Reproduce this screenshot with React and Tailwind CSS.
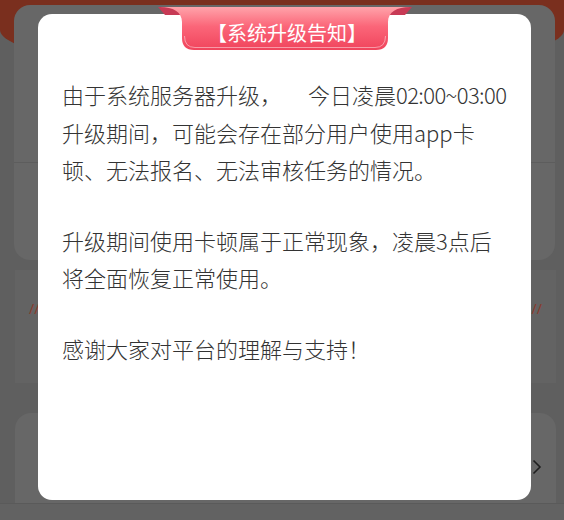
import React from "react";

const cjk = { fontFamily: '"Noto Sans CJK SC", "Noto Sans", sans-serif' };

function Ribbon() {
  return (
    <div className="absolute left-[155px] top-[6px] h-[46px] w-[260px]">
      <svg width="260" height="46" viewBox="0 0 260 46" className="absolute inset-0">
        <defs>
          <linearGradient id="rb" x1="0" y1="0" x2="0" y2="1">
            <stop offset="0" stopColor="#ffa3aa" />
            <stop offset="0.45" stopColor="#fb6679" />
            <stop offset="1" stopColor="#f0445c" />
          </linearGradient>
        </defs>
        <path d="M3 1 L257 1 L250 9 L10 9 Z" fill="#c73a55" />
        <path
          d="M5 1 C18 1 27 6 27 16 L27 32 Q27 44 39 44 L221 44 Q233 44 233 32 L233 16 C233 6 242 1 255 1 Z"
          fill="url(#rb)"
        />
        <path
          d="M29.5 30 Q29.5 41.5 40 41.5 L220 41.5 Q230.5 41.5 230.5 30"
          fill="none"
          stroke="#ffffff"
          strokeOpacity="0.45"
          strokeWidth="1"
        />
      </svg>
      <div
        className="absolute inset-x-0 top-[13px] pl-[4px] text-center text-[20px] leading-[28px] text-white"
        style={cjk}
      >
        【系统升级告知】
      </div>
    </div>
  );
}

function Notice() {
  return (
    <div className="absolute left-[38px] top-[14px] h-[486px] w-[493px] rounded-[14px] bg-white px-[24px] pt-[62px]">
      <div className="text-[22px] font-light leading-[37.5px] text-[#333333]" style={cjk}>
        <p className="whitespace-nowrap">
          由于系统服务器升级，<span className="ml-[26px]">今日凌晨</span>
          <span className="tracking-[-0.6px]">02:00~03:00</span>
          <br />
          升级期间，可能会存在部分用户使用app卡
          <br />
          顿、无法报名、无法审核任务的情况。
        </p>
        <p className="mt-[33px] whitespace-nowrap">
          升级期间使用卡顿属于正常现象，凌晨3点后
          <br />
          将全面恢复正常使用。
        </p>
        <p className="mt-[33px] whitespace-nowrap">感谢大家对平台的理解与支持！</p>
      </div>
    </div>
  );
}

export default function App() {
  return (
    <div className="relative h-[520px] w-[564px] overflow-hidden bg-[#5f5f5f]">
      <div className="h-[72px] rounded-b-[50%_42px] bg-[#7a2f1e]" />
      <div className="ml-[14px] mr-[9px] -mt-[67px] h-[255px] rounded-[16px] bg-[#676767]">
        <div className="h-[158px] border-b border-[#5d5d5d]" />
      </div>
      <div className="ml-[15px] mr-[8px] mt-[10px] flex h-[113px] items-start justify-between bg-[#636363] px-[14px] pt-[28px]">
        <span className="text-[14px] text-[#8a3a2c]">//</span>
        <span className="text-[14px] text-[#8a3a2c]">//</span>
      </div>
      <div className="ml-[15px] mr-[8px] mt-[30px] flex h-[90px] items-center justify-end rounded-t-[16px] bg-[#676767] pr-[14px] pt-[18px]">
        <svg width="10" height="16" viewBox="0 0 10 16">
          <path d="M1.5 1.5 L8 8 L1.5 14.5" fill="none" stroke="#1f1f1f" strokeWidth="1.6" />
        </svg>
      </div>
      <div className="h-[20px] border-t border-[#5a5a5a] bg-[#626262]" />
      <Notice />
      <Ribbon />
    </div>
  );
}
